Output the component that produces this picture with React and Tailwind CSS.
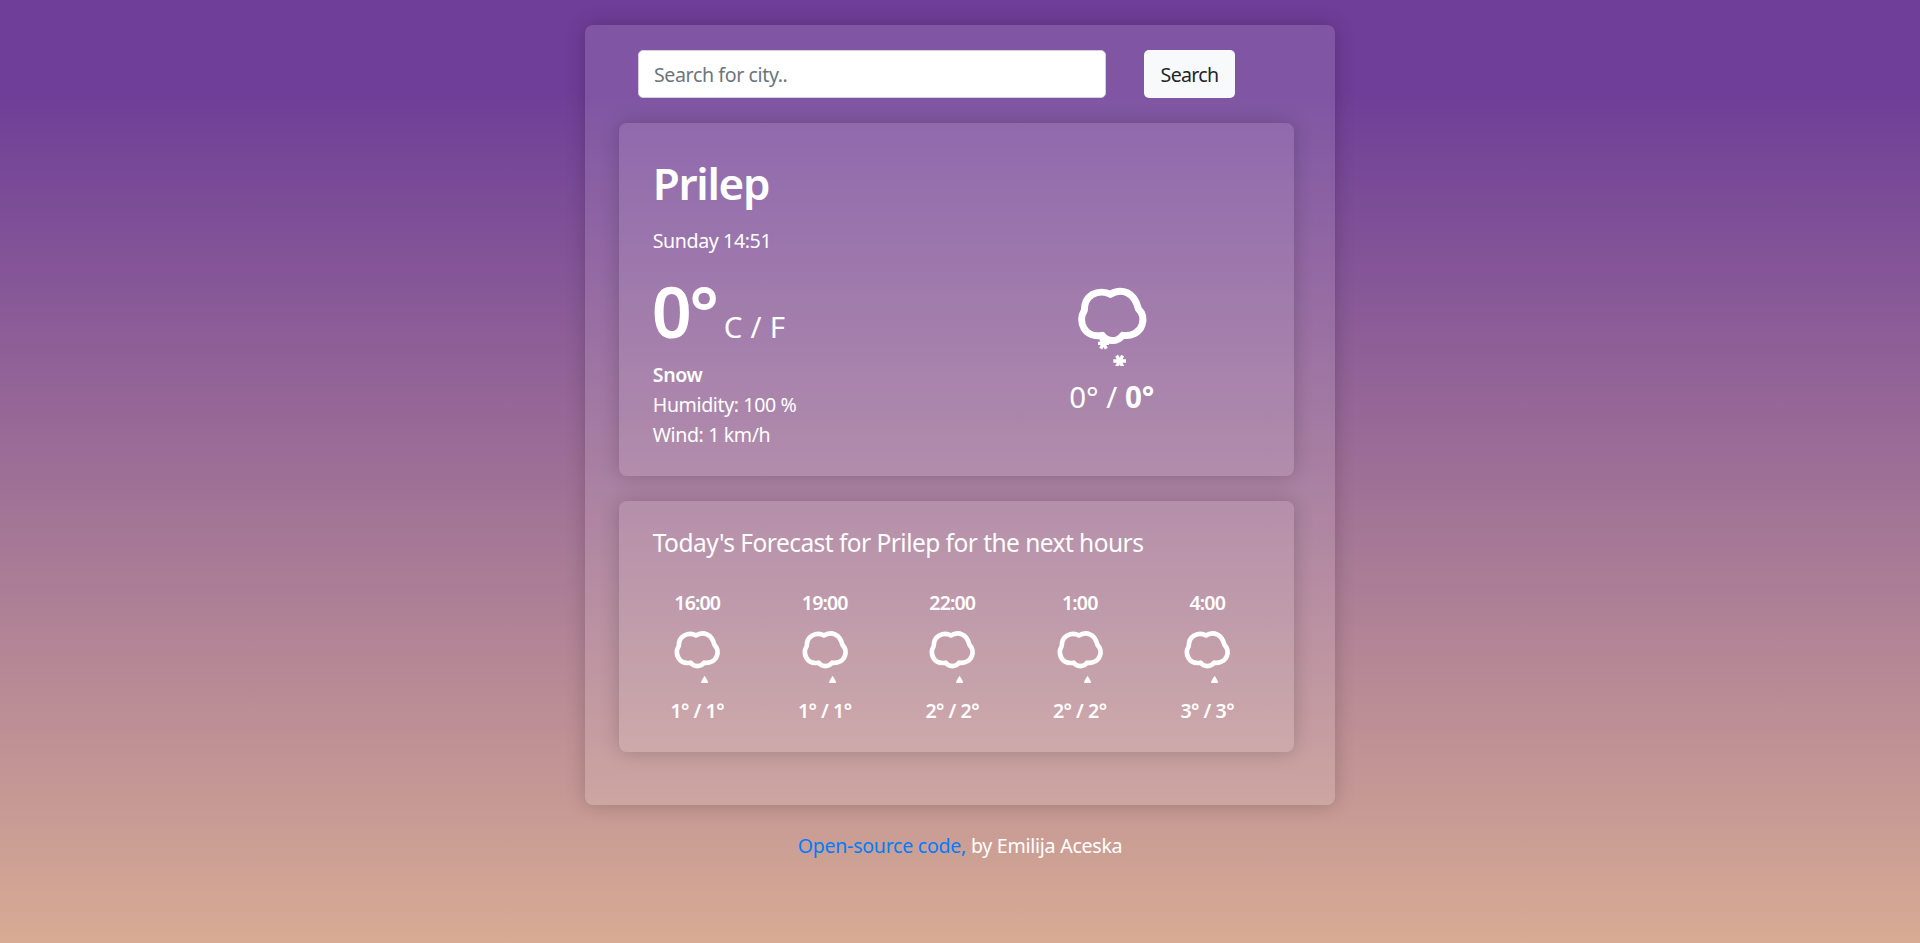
const hours = [
  ["16:00", "1° / 1°"],
  ["19:00", "1° / 1°"],
  ["22:00", "2° / 2°"],
  ["1:00", "2° / 2°"],
  ["4:00", "3° / 3°"],
];

function Cloud({ className, children }) {
  return (
    <svg viewBox="0 0 255 258" fill="none" stroke="#fff" className={`block ${className}`}>
      <path
        d="M121 43C107 35 85 34 66 44C49 54 43 69 43 91C33 107 32 128 42 145C52 162 72 171 97 166C112 186 141 188 158 166C183 170 208 158 216 135C223 114 217 98 205 86C200 66 190 47 173 39C156 31 136 33 121 43Z"
        strokeWidth="21"
        strokeLinejoin="round"
      />
      {children}
    </svg>
  );
}

export default function App() {
  return (
    <div className="h-[943px] overflow-hidden bg-[linear-gradient(180deg,#6e3e98_9.5%,#d8ab94_100%)] pt-[25px] font-['Noto_Sans',sans-serif] text-[19.6px] leading-[30px] tracking-[-0.02em] text-white">
      <main className="mx-auto h-[780px] w-[750px] rounded-lg bg-white/12 pt-[25px] pl-[34px] shadow-[0_0_20px_rgba(0,0,0,0.2)]">
        <form className="flex gap-[38px] pl-[19px]">
          <input
            className="h-12 w-[468px] rounded-[5px] border border-[#ced4da] bg-white px-[15px] placeholder:text-[#6c757d]"
            placeholder="Search for city.."
          />
          <button type="button" className="h-12 w-[91px] rounded-[5px] bg-[#f8f9fa] pt-px tracking-[-0.036em] text-[#212529]">
            Search
          </button>
        </form>
        <section className="mt-[25px] flex h-[353px] w-[675px] rounded-lg bg-white/10 pt-[33px] pl-[33.75px] shadow-[0_0_20px_rgba(0,0,0,0.2)]">
          <div className="w-[395px]">
            <h1 className="text-[44px] leading-[54px] font-semibold tracking-[-0.03em]">Prilep</h1>
            <p className="mt-[16px]">Sunday 14:51</p>
            <div className="mt-[10px] flex h-[94px] items-baseline">
              <strong className="-ml-px text-[70px] leading-[90px] font-semibold tracking-[-0.035em]">0°</strong>
              <span className="ml-[7px] text-[29.5px] tracking-[0.01em]">C / F</span>
            </div>
            <p className="font-semibold">Snow</p>
            <p>Humidity: 100 %</p>
            <p>Wind: 1 km/h</p>
          </div>
          <div className="flex w-[130px] flex-col items-center pt-[124px]">
            <Cloud className="h-[86px] w-[85px]">
              <path d="M84 190H117M92 176L109 206M109 176L92 206" strokeWidth="10" />
              <path d="M130 243H168M140 227L158 260M158 227L140 260" strokeWidth="10" />
            </Cloud>
            <p className="mt-[8px] -ml-[2px] text-[29.5px] leading-[45px] tracking-normal">
              0° / <b>0°</b>
            </p>
          </div>
        </section>
        <section className="mt-[25px] h-[251px] w-[675px] rounded-lg bg-white/10 pt-[23px] pl-[33.75px] shadow-[0_0_20px_rgba(0,0,0,0.2)]">
          <h2 className="text-[24.5px] leading-[38px] tracking-[-0.022em]">Today's Forecast for Prilep for the next hours</h2>
          <div className="mt-[26px] flex gap-[37.5px]">
            {hours.map(([time, temp]) => (
              <div key={time} className="flex w-[90px] flex-col items-center font-semibold">
                <span className="-ml-px tracking-[-0.045em]">{time}</span>
                <Cloud className="mt-[7.5px] h-[57px] w-[56.8px]">
                  <path d="M160 225Q168 236 176 254Q177 258 172 258H148Q143 258 144 254Q152 236 160 225Z" fill="#fff" stroke="none" />
                </Cloud>
                <span className="mt-[13.5px] -ml-px tracking-[-0.025em]">{temp}</span>
              </div>
            ))}
          </div>
        </section>
      </main>
      <footer className="mt-[26px] text-center tracking-[-0.014em]">
        <span className="text-[#007bff]">Open-source code,</span> by Emilija Aceska
      </footer>
    </div>
  );
}
